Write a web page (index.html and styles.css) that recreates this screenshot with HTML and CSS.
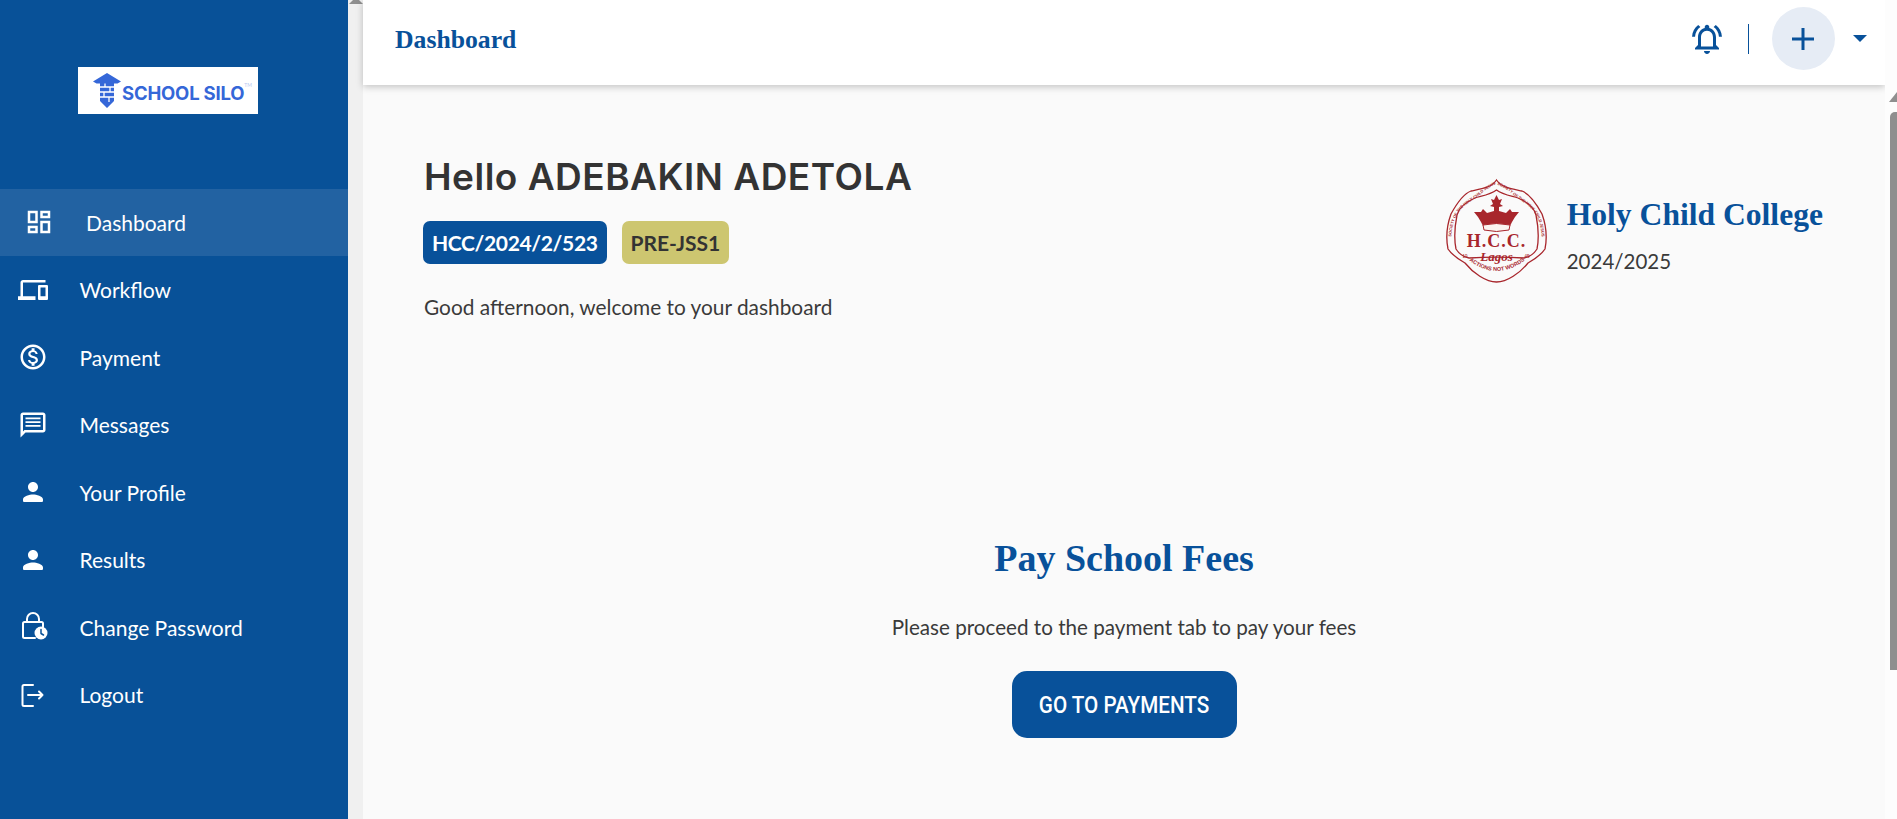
FILE: index.html
```html
<!DOCTYPE html>
<html lang="en">
<head>
<meta charset="utf-8">
<title>Dashboard</title>
<link rel="stylesheet" href="styles.css">
</head>
<body>
<aside class="sidebar">
  <div class="logo-wrap">
    <div class="logo">
      <svg class="logo-mark" viewBox="0 0 28 36" width="28" height="36">
        <path class="lm-fill" d="M14 0 28 8.500 24.500 10.500H21V28L14 35 7 28V10.500H3.500L0 8.500Z"/>
        <path class="lm-line" d="M7 14h14M7 19h14M7 24h14M12 10.500v3.500M17 14v5M11 19v5M16 24v5"/>
      </svg>
      <span class="logo-text">SCHOOL SILO</span><span class="logo-tm">TM</span>
    </div>
  </div>
  <nav class="nav">
    <a class="nav-item active">
      <svg class="ico" viewBox="0 0 24 24"><path d="M19 5v2h-4V5h4M9 5v6H5V5h4m10 8v6h-4v-6h4M9 17v2H5v-2h4M21 3h-8v6h8V3zM11 3H3v10h8V3zm10 8h-8v10h8V11zm-10 4H3v6h8v-6z"/></svg>
      <span>Dashboard</span>
    </a>
    <a class="nav-item">
      <svg class="ico" viewBox="0 0 24 24"><path d="M4 6h18V4H4c-1.100 0-2 .9-2 2v11H0v3h14v-3H4V6zm19 2h-6c-.55 0-1 .45-1 1v10c0 .55.45 1 1 1h6c.55 0 1-.45 1-1V9c0-.55-.45-1-1-1zm-1 9h-4v-7h4v7z"/></svg>
      <span>Workflow</span>
    </a>
    <a class="nav-item">
      <svg class="ico" viewBox="0 0 24 24"><path d="M12 2C6.480 2 2 6.480 2 12s4.480 10 10 10 10-4.480 10-10S17.520 2 12 2zm0 18c-4.410 0-8-3.590-8-8s3.590-8 8-8 8 3.590 8 8-3.590 8-8 8zm.31-8.860c-1.770-.45-2.340-.94-2.340-1.670 0-.84.79-1.430 2.100-1.430 1.380 0 1.900.66 1.940 1.640h1.710c-.05-1.340-.87-2.570-2.490-2.970V5H10.900v1.690c-1.510.32-2.720 1.300-2.720 2.810 0 1.790 1.490 2.690 3.660 3.210 1.950.46 2.340 1.150 2.340 1.870 0 .53-.39 1.390-2.100 1.390-1.600 0-2.230-.72-2.320-1.640H8.040c.1 1.700 1.360 2.660 2.860 2.970V19h2.340v-1.670c1.520-.29 2.720-1.160 2.730-2.770-.01-2.200-1.900-2.960-3.660-3.420z"/></svg>
      <span>Payment</span>
    </a>
    <a class="nav-item">
      <svg class="ico" viewBox="0 0 24 24"><path d="M20 2H4c-1.100 0-2 .9-2 2v18l4-4h14c1.100 0 2-.9 2-2V4c0-1.100-.9-2-2-2zm0 14H5.170L4 17.170V4h16v12z"/><path d="M6 12h12v1.300H6zm0-3h12v1.300H6zm0-3h12v1.300H6z"/></svg>
      <span>Messages</span>
    </a>
    <a class="nav-item">
      <svg class="ico" viewBox="0 0 24 24"><path d="M12 12c2.210 0 4-1.790 4-4s-1.790-4-4-4-4 1.790-4 4 1.790 4 4 4zm0 2c-2.670 0-8 1.340-8 4v1c0 .55.45 1 1 1h14c.55 0 1-.45 1-1v-1c0-2.660-5.330-4-8-4z"/></svg>
      <span>Your Profile</span>
    </a>
    <a class="nav-item">
      <svg class="ico" viewBox="0 0 24 24"><path d="M12 12c2.210 0 4-1.790 4-4s-1.790-4-4-4-4 1.790-4 4 1.790 4 4 4zm0 2c-2.670 0-8 1.340-8 4v1c0 .55.45 1 1 1h14c.55 0 1-.45 1-1v-1c0-2.660-5.330-4-8-4z"/></svg>
      <span>Results</span>
    </a>
    <a class="nav-item">
      <svg class="ico ico-stroke" viewBox="0 0 30 30">
        <path d="M17 26H6.500Q5 26 5 24.500V11.500Q5 10 6.500 10H23.500Q25 10 25 11.500V15"/>
        <path d="M9 10V7A6 6 0 0 1 21 7V10"/>
        <circle class="clock" cx="23" cy="21" r="6.500"/>
        <path class="clock-hand" d="M23 17.500V21.500L25.500 23"/>
      </svg>
      <span>Change Password</span>
    </a>
    <a class="nav-item">
      <svg class="ico ico-stroke" viewBox="0 0 30 30">
        <path d="M15 5H6Q4.500 5 4.500 6.500V24.500Q4.500 26 6 26H15"/>
        <path d="M10 15H24.500M21 11.500 24.500 15 21 18.500"/>
      </svg>
      <span>Logout</span>
    </a>
  </nav>
</aside>

<div class="strip"><span class="arrow-up arrow-small"></span></div>

<div class="main">
  <header class="topbar">
    <h1 class="page-title">Dashboard</h1>
    <div class="top-actions">
      <svg class="bell" viewBox="0 0 24 24"><path d="M18 16v-5c0-3.070-1.640-5.640-4.500-6.320V4c0-.83-.67-1.500-1.500-1.500s-1.500.67-1.500 1.500v.68C7.630 5.360 6 7.920 6 11v5l-2 2v1h16v-1l-2-2zm-2 1H8v-6c0-2.480 1.510-4.500 4-4.500s4 2.020 4 4.500v6zm-4 5c1.100 0 2-.9 2-2h-4c0 1.100.9 2 2 2zM7.580 4.080 6.150 2.650C3.750 4.480 2.170 7.300 2.030 10.500h2c.15-2.650 1.510-4.970 3.550-6.420zM19.970 10.500h2c-.15-3.200-1.730-6.020-4.120-7.850l-1.420 1.430c2.020 1.450 3.390 3.770 3.540 6.420z"/></svg>
      <span class="divider"></span>
      <span class="avatar">
        <svg class="plus" viewBox="0 0 22 22"><path d="M11 0V22M0 11H22"/></svg>
      </span>
      <span class="caret"></span>
    </div>
  </header>

  <section class="welcome">
    <div class="welcome-left">
      <h2 class="hello">Hello ADEBAKIN ADETOLA</h2>
      <div class="badges">
        <span class="badge badge-blue">HCC/2024/2/523</span>
        <span class="badge badge-gold">PRE-JSS1</span>
      </div>
      <p class="greet">Good afternoon, welcome to your dashboard</p>
    </div>
    <div class="school">
      <svg class="crest" viewBox="17 13 104 106">
        <defs>
          <path id="crest-arc" d="M24 86C22 70 24 58 30 48C37 38 50 33 56 26Q62 22 68 19Q75 22 81 26C87 33 100 38 107 48C113 58 115 70 113 86"/>
          <path id="crest-rib" d="M42 96Q68 116 96 96"/>
        </defs>
        <path class="c-line" d="M68.500 15C63 23 53 24 43 26C35 29 29 38 23 49C19 60 18 74 20 84C24 90 30 94 37 98C45 108 58 117 68.500 117C79 117 92 108 100 98C107 94 113 90 117 84C119 74 118 60 114 49C108 38 102 29 94 26C84 24 74 23 68.500 15Z"/>
        <path class="c-line" d="M68.500 25C62 30 53 31 47 33C38 37 31 42 29 50C27 60 26 74 28 84C31 89 36 92 41 93C58 92 79 92 96 93C101 92 106 89 109 84C111 74 110 60 108 50C106 42 99 37 90 33C84 31 75 30 68.500 25Z"/>
        <text class="c-tiny"><textPath href="#crest-arc" startOffset="50%" text-anchor="middle">SOCIETY OF THE HOLY CHILD JESUS SOCIETY OF THE HOLY CHILD JESUS</textPath></text>
        <text class="c-tiny c-rib"><textPath href="#crest-rib" startOffset="50%" text-anchor="middle">ACTIONS NOT WORDS</textPath></text>
        <path class="c-fill" d="M68.500 30 71 35 74 34 72 39 75 41 71 42V46L78 48 82 44 84 47 91 47 87 52 84 57 82 61H55L53 57 50 52 46 47 53 47 55 44 59 48 66 46V42L62 41 65 39 63 34 66 35Z"/>
        <path class="c-band" d="M55 60Q68.500 57 82 60L81 65Q68.500 68 56 65Z"/>
        <text class="c-hcc" x="68.500" y="82" text-anchor="middle">H.C.C.</text>
        <text class="c-lagos" x="68.500" y="96" text-anchor="middle">Lagos</text>
        <text class="c-tiny c-num" x="37" y="93" text-anchor="middle">19</text>
        <text class="c-tiny c-num" x="99" y="93" text-anchor="middle">45</text>
      </svg>
      <div class="school-info">
        <div class="school-name">Holy Child College</div>
        <div class="school-year">2024/2025</div>
      </div>
    </div>
  </section>

  <section class="fees">
    <h2 class="fees-title">Pay School Fees</h2>
    <p class="fees-text">Please proceed to the payment tab to pay your fees</p>
    <a class="fees-btn"><span class="fees-btn-label">GO TO PAYMENTS</span></a>
  </section>
</div>

<div class="scrollbar">
  <span class="arrow-up arrow-big"></span>
  <span class="thumb"></span>
</div>
</body>
</html>
```
FILE: styles.css
```css
* { box-sizing: border-box; }
html, body { height: 100%; }
body {
  margin: 0;
  display: flex;
  height: 819px;
  overflow: hidden;
  background: #fafafa;
  color: #3a3a3a;
  font-family: "Lato", sans-serif;
}

/* sidebar */
.sidebar { width: 348px; flex: none; background: #085198; color: #fff; }
.logo-wrap { height: 188.700px; padding: 67px 0 0 78px; display: flex; }
.logo {
  width: 180px; height: 47px;
  background: #fff;
  display: flex; align-items: center;
  padding-left: 15px;
  color: #3567d8;
}
.logo-mark { flex: none; }
.lm-fill { fill: #3567d8; }
.lm-line { fill: none; stroke: #fff; stroke-width: 1.300; }
.logo-text {
  margin-left: 1px;
  font: 700 18.500px "Inter", sans-serif;
  letter-spacing: -0.200px;
  line-height: 1;
  padding-top: 5px;
  white-space: nowrap;
}
.logo-tm { font-size: 5px; align-self: flex-start; margin-top: 15px; color: #b8c8f0; }

.nav { display: flex; flex-direction: column; }
.nav-item {
  height: 67.500px;
  display: flex; align-items: center;
  padding-left: 18px;
  font-size: 21px;
  color: #fff;
}
.nav-item.active { background: #2262a2; padding-left: 24px; }
.nav-item span { margin-left: 32px; }
.nav-item:not(.active) span { margin-left: 31.500px; }
.ico { width: 30px; height: 30px; flex: none; fill: #fff; }
.ico-stroke { fill: none; stroke: #fff; stroke-width: 2; stroke-linecap: round; stroke-linejoin: round; }
.clock { fill: #fff; stroke: none; }
.clock-hand { stroke: #085198; stroke-width: 1.500; fill: none; }

/* left strip */
.strip { width: 15px; flex: none; background: #f0f0f0; display: flex; justify-content: center; }
.arrow-up {
  display: block;
  width: 0; height: 0;
  border-left: 8px solid transparent;
  border-right: 8px solid transparent;
  border-bottom: 10px solid #8f8f8f;
}
.arrow-small { border-bottom-width: 7px; border-left-width: 7px; border-right-width: 7px; margin-top: -3px; }

/* main column */
.main { flex: 1; min-width: 0; display: flex; flex-direction: column; }
.topbar {
  height: 85px; flex: none;
  background: #fff;
  box-shadow: 0 2px 7px rgba(0, 0, 0, .22);
  display: flex; align-items: center; justify-content: space-between;
  padding: 0 18px 0 32px;
}
.page-title {
  margin: 0 0 5px;
  font: 700 25.700px "Liberation Serif", serif;
  color: #08519a;
}
.top-actions { display: flex; align-items: center; }
.bell { width: 36px; height: 36px; fill: #08519a; margin-top: -8px; }
.divider { width: 1px; height: 30px; background: #08519a; margin: -8px 23px 0 23px; }
.avatar {
  width: 63px; height: 63px; border-radius: 50%;
  background: #e6ecf5;
  display: flex; align-items: center; justify-content: center;
  margin-top: -8px;
}
.plus { width: 22px; height: 22px; margin-left: -1px; fill: none; stroke: #08519a; stroke-width: 3; }
.caret {
  width: 0; height: 0;
  margin: -8px 0 0 18px;
  border-left: 7px solid transparent;
  border-right: 7px solid transparent;
  border-top: 7px solid #08519a;
}

/* welcome */
.welcome {
  display: flex; justify-content: space-between; align-items: flex-start;
  padding: 68px 62px 0 60px;
}
.hello {
  margin: 0 0 0 1px;
  font: 600 37px/48px "Inter", sans-serif;
  color: #333;
  letter-spacing: 0.500px;
}
.badges { display: flex; gap: 15px; margin-top: 20px; }
.badge {
  height: 43px; padding: 0 9px;
  border-radius: 7px;
  display: flex; align-items: center;
  font-size: 21px; font-weight: 700;
}
.badge-blue { background: #08519a; color: #fff; letter-spacing: -0.350px; }
.badge-gold { background: #cdc670; color: #333; }
.greet { margin: 31px 0 0 1px; font-size: 20.850px; line-height: 24px; }

.school { display: flex; align-items: flex-start; gap: 18px; margin-top: 25px; }
.crest { width: 104px; height: 106px; flex: none; }
.c-line { fill: none; stroke: #a8262c; stroke-width: 1.300; }
.c-fill { fill: #a8262c; }
.c-band { fill: #fbf3ef; stroke: #a8262c; stroke-width: 1; }
.c-tiny { font: 700 4px "Liberation Sans", sans-serif; fill: #a8262c; }
.c-rib { font-size: 5.500px; }
.c-num { font-size: 4.500px; font-weight: 400; }
.c-hcc { font: 700 18px "Liberation Serif", serif; letter-spacing: 1px; fill: #a8262c; }
.c-lagos { font: 700 italic 13px "Liberation Serif", serif; fill: #a8262c; }
.school-info { padding-top: 17px; }
.school-name {
  font: 700 31.600px/40px "Liberation Serif", serif;
  color: #08519a;
  white-space: nowrap;
}
.school-year { margin-top: 14px; font-size: 20.500px; line-height: 24px; }

/* fees */
.fees {
  display: flex; flex-direction: column; align-items: center;
  margin-top: 217px;
}
.fees-title { margin: 0; font: 700 38px/44px "Liberation Serif", serif; color: #08519a; }
.fees-text { margin: 35px 0 0; height: 25px; font-size: 20.650px; line-height: 24px; }
.fees-btn {
  margin-top: 31px;
  width: 225px; height: 67px;
  border-radius: 15px;
  background: #08519a;
  color: #fff;
  display: flex; align-items: center; justify-content: center;
  font: 500 24px "Roboto", sans-serif;
}
.fees-btn-label { display: block; white-space: nowrap; transform: scaleX(.86); }

/* right scrollbar */
.scrollbar {
  width: 12px; flex: none;
  background: #fdfdfd;
  display: flex; flex-direction: column; align-items: flex-start;
  padding: 92px 0 0 4px;
}
.arrow-big { flex: none; }
.thumb {
  display: block; flex: none;
  width: 14px; height: 558px;
  margin: 10px 0 0 1px;
  border-radius: 5px 5px 0 0;
  background: #8f8f8f;
}
```
